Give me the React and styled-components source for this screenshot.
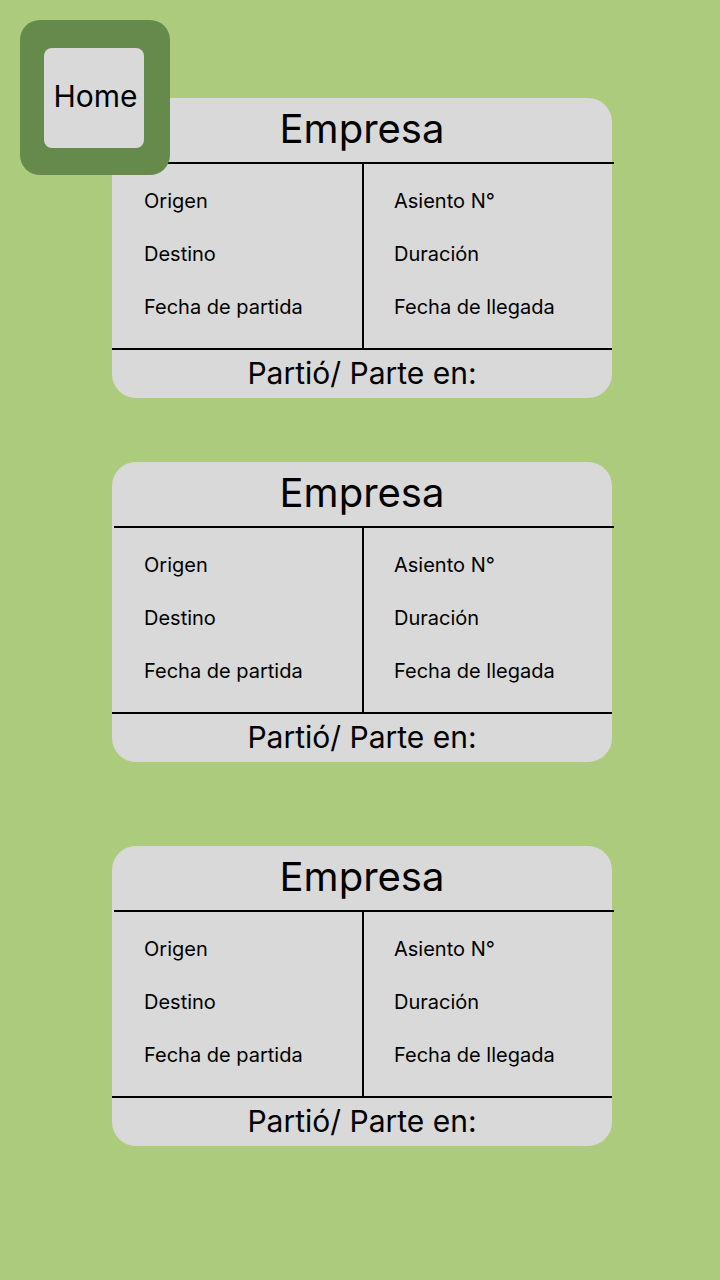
import React from 'react';
import styled, {createGlobalStyle} from 'styled-components';

const GlobalStyle = createGlobalStyle`
    html, body {
        margin: 0;
        padding: 0;
        background: #accb7c;
        font-family: Inter, "Noto Sans", sans-serif;
        color: #000;
    }
`;

const Page = styled.div`
    position: relative;
    width: 720px;
    min-height: 1280px;
    box-sizing: border-box;
    padding: 98px 0 0 112px;
    display: flex;
    flex-direction: column;
`;

const HomeFrame = styled.div`
    position: absolute;
    left: 20px;
    top: 20px;
    width: 150px;
    height: 155px;
    border-radius: 20px;
    background: #668a4c;
    z-index: 2;
    box-sizing: border-box;
    padding: 28px 0 0 24px;
`;

const HomeButton = styled.button`
    width: 100px;
    height: 100px;
    border: none;
    border-radius: 8px;
    background: #d9d9d9;
    font-family: Inter, sans-serif;
    font-size: 30px;
    color: #000;
    padding: 0 0 5px 3px;
    cursor: pointer;
`;

const Card = styled.div`
    width: 500px;
    height: 300px;
    margin-top: ${props => props.$offset}px;
    background: #d9d9d9;
    border-radius: 24px;
    display: flex;
    flex-direction: column;
`;

const Title = styled.div`
    height: 64px;
    display: flex;
    align-items: center;
    justify-content: center;
    font-size: 40px;
    padding-bottom: 4px;
    box-sizing: border-box;
`;

const TopRule = styled.div`
    height: 2px;
    width: 500px;
    margin-left: 2px;
    background: #000;
`;

const Body = styled.div`
    height: 184px;
    display: grid;
    grid-template-columns: 250px 2px 1fr;
`;

const Column = styled.div`
    display: flex;
    flex-direction: column;
    gap: 29px;
    padding: 25px 0 0 ${props => props.$pad}px;
    font-size: 20px;
    line-height: 24px;
`;

const Divider = styled.div`
    background: #000;
`;

const BottomRule = styled.div`
    height: 2px;
    background: #000;
`;

const Footer = styled.div`
    flex: 1;
    display: flex;
    align-items: center;
    justify-content: center;
    font-size: 30px;
    padding-bottom: 2px;
`;

const TicketCard = ({offset}) => (
    <Card $offset={offset}>
        <Title>Empresa</Title>
        <TopRule />
        <Body>
            <Column $pad={32}>
                <span>Origen</span>
                <span>Destino</span>
                <span>Fecha de partida</span>
            </Column>
            <Divider />
            <Column $pad={30}>
                <span>Asiento N°</span>
                <span>Duración</span>
                <span>Fecha de llegada</span>
            </Column>
        </Body>
        <BottomRule />
        <Footer>Partió/ Parte en:</Footer>
    </Card>
);

const App = () => {
    const offsets = [0, 64, 84];

    return (
        <Page>
            <GlobalStyle />
            <HomeFrame>
                <HomeButton>Home</HomeButton>
            </HomeFrame>
            {offsets.map((o, i) => <TicketCard key={i} offset={o} />)}
        </Page>
    );
}

export default App;
